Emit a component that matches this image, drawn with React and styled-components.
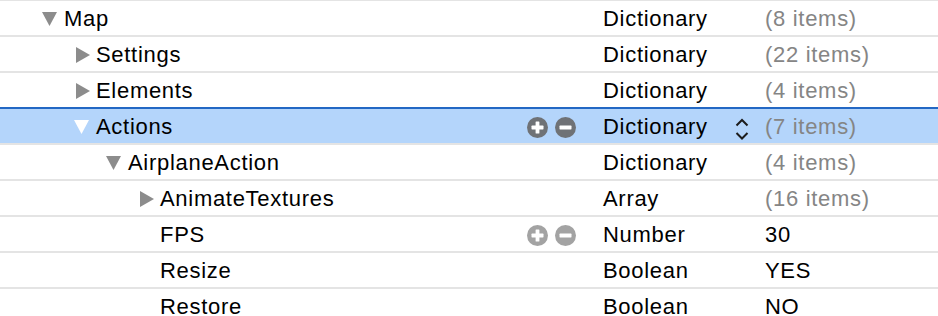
import styled, { createGlobalStyle } from 'styled-components';

const GlobalStyle = createGlobalStyle`
  html, body {
    margin: 0;
    padding: 0;
    background: #ffffff;
    overflow: hidden;
  }
  body {
    font-family: "Liberation Sans", Arial, sans-serif;
  }
`;

const rows = [
  { level: 0, key: 'Map', disclosure: 'open', type: 'Dictionary', value: '(8 items)', muted: true },
  { level: 1, key: 'Settings', disclosure: 'closed', type: 'Dictionary', value: '(22 items)', muted: true },
  { level: 1, key: 'Elements', disclosure: 'closed', type: 'Dictionary', value: '(4 items)', muted: true },
  { level: 1, key: 'Actions', disclosure: 'open', type: 'Dictionary', value: '(7 items)', muted: true, selected: true, editable: true, stepper: true },
  { level: 2, key: 'AirplaneAction', disclosure: 'open', type: 'Dictionary', value: '(4 items)', muted: true },
  { level: 3, key: 'AnimateTextures', disclosure: 'closed', type: 'Array', value: '(16 items)', muted: true },
  { level: 3, key: 'FPS', type: 'Number', value: '30', editable: true },
  { level: 3, key: 'Resize', type: 'Boolean', value: 'YES' },
  { level: 3, key: 'Restore', type: 'Boolean', value: 'NO' },
];

export default function App() {
  return (
    <>
      <GlobalStyle />
      <Outline>
        {rows.map((row) => (
          <Row key={row.key} selected={row.selected}>
            <KeyCell level={row.level}>
              <Disclosure>
                {row.disclosure && (
                  <Triangle open={row.disclosure === 'open'} selected={row.selected} />
                )}
              </Disclosure>
              <KeyText>{row.key}</KeyText>
              {row.editable && (
                <RowButtons>
                  <RoundButton kind="add" selected={row.selected} />
                  <RoundButton kind="remove" selected={row.selected} />
                </RowButtons>
              )}
            </KeyCell>
            <TypeCell>
              <span>{row.type}</span>
              {row.stepper && <Stepper />}
            </TypeCell>
            <ValueCell muted={row.muted}>{row.value}</ValueCell>
          </Row>
        ))}
      </Outline>
    </>
  );
}

function Triangle({ open, selected }) {
  const fill = selected ? '#ffffff' : '#8c8c8c';
  return (
    <svg width="24" height="24" viewBox="0 0 24 24">
      {open ? (
        <polygon points="2,5 17,5 9.5,19" fill={fill} />
      ) : (
        <polygon points="4,4 18,12 4,20" fill={fill} />
      )}
    </svg>
  );
}

function RoundButton({ kind, selected }) {
  const fill = selected ? '#6f7276' : '#a3a3a3';
  return (
    <svg width="21" height="21" viewBox="0 0 21 21">
      <circle cx="10.5" cy="10.5" r="10.5" fill={fill} />
      <rect x="4.5" y="8.6" width="12" height="3.8" rx="0.6" fill="#ffffff" />
      {kind === 'add' && <rect x="8.6" y="4.5" width="3.8" height="12" rx="0.6" fill="#ffffff" />}
    </svg>
  );
}

function Stepper() {
  return (
    <svg width="14" height="24" viewBox="0 0 14 24">
      <polyline points="1.5,7.5 7,2 12.5,7.5" fill="none" stroke="#1c1c1c" strokeWidth="2" strokeLinejoin="miter" />
      <polyline points="1.5,15 7,20.5 12.5,15" fill="none" stroke="#1c1c1c" strokeWidth="2" strokeLinejoin="miter" />
    </svg>
  );
}

const Outline = styled.div`
  display: flex;
  flex-direction: column;
  width: 938px;
  margin-top: -1px;
`;

const Row = styled.div`
  display: flex;
  align-items: center;
  height: 36px;
  box-sizing: border-box;
  padding-top: 2px;
  border-top: 2px solid ${(p) => (p.selected ? '#2368c4' : '#e4e4e4')};
  background: ${(p) => (p.selected ? '#b4d5fb' : '#ffffff')};
  font-size: 22px;
  letter-spacing: 0.7px;
  color: #000000;
`;

const KeyCell = styled.div`
  display: flex;
  align-items: center;
  width: 603px;
  box-sizing: border-box;
  padding-left: ${(p) => 40 + p.level * 32}px;
  padding-right: 27px;
`;

const Disclosure = styled.div`
  display: flex;
  align-items: center;
  width: 24px;
  height: 24px;
  flex-shrink: 0;
`;

const KeyText = styled.span`
  white-space: nowrap;
`;

const RowButtons = styled.div`
  display: flex;
  align-items: center;
  gap: 7px;
  margin-left: auto;
`;

const TypeCell = styled.div`
  display: flex;
  align-items: center;
  justify-content: space-between;
  width: 162px;
  box-sizing: border-box;
  padding-right: 16px;

  svg {
    margin-top: 5px;
  }
`;

const ValueCell = styled.div`
  flex: 1;
  white-space: nowrap;
  color: ${(p) => (p.muted ? '#858585' : '#000000')};
`;
